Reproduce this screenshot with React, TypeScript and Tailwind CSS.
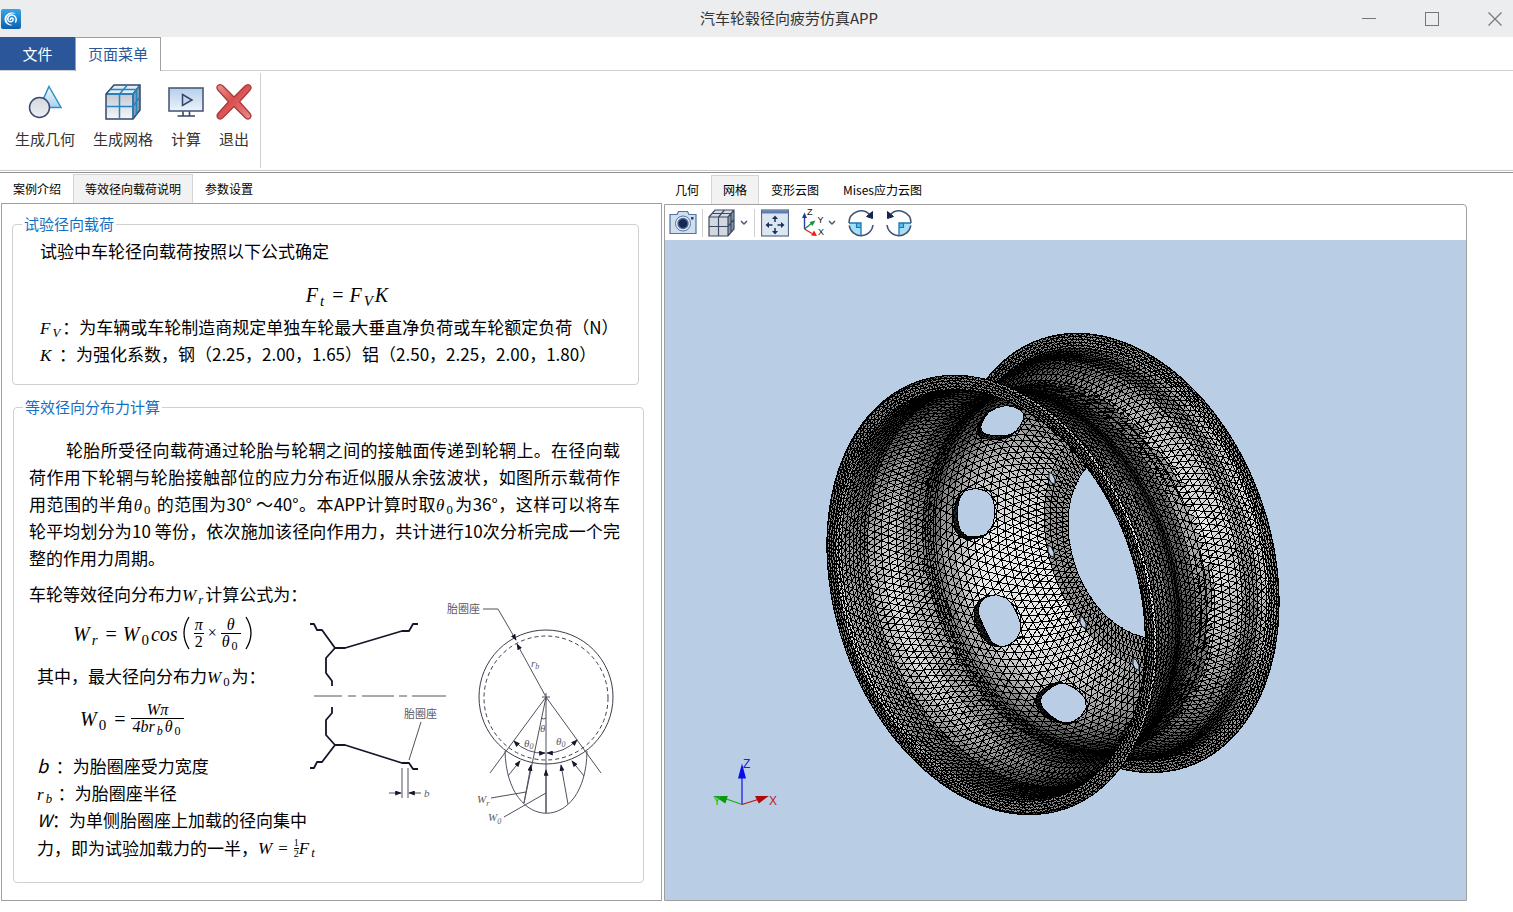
import React, { useMemo, useState } from "react";

type Vec2 = [number, number];

/* ---------- wheel mesh ---------- */

const CENTER: Vec2 = [990.5, 595];
const RIM_PROFILE: Vec2[] = [
  [2, 226], [0, 224], [0, 212], [6, 209], [24, 207], [42, 206], [58, 201], [74, 192], [98, 187],
  [118, 188], [134, 199], [150, 206], [170, 208], [179, 212], [181, 223], [181, 226],
];
const DISC_PROFILE: Vec2[] = [
  [98, 188], [130, 190], [148, 188], [160, 184], [170, 179], [185, 168], [200, 150], [210, 136], [215, 128], [216, 96],
];

const E1 = [0.165, 0.972, 0.167];
const E2 = [-0.711, 0, 0.703];
const AX = [0.683, -0.235, 0.691];

type Node3 = { x: number; y: number; z: number; out: boolean };

function project(s: number, r: number, a: number): Node3 {
  const c = Math.cos(a) * r;
  const d = Math.sin(a) * r;
  return {
    x: CENTER[0] + s * AX[0] + c * E1[0] + d * E2[0],
    y: CENTER[1] + s * AX[1] + c * E1[1],
    z: s * AX[2] + c * E1[2] + d * E2[2],
    out: false,
  };
}

function pathLengths(profile: Vec2[]): number[] {
  const acc = [0];
  for (let i = 1; i < profile.length; i++) {
    acc.push(acc[i - 1] + Math.hypot(profile[i][0] - profile[i - 1][0], profile[i][1] - profile[i - 1][1]));
  }
  return acc;
}

function at(profile: Vec2[], acc: number[], t: number): Vec2 {
  let i = 1;
  while (i < acc.length - 1 && acc[i] < t) i++;
  const k = Math.min(1, Math.max(0, (t - acc[i - 1]) / (acc[i] - acc[i - 1])));
  return [
    profile[i - 1][0] + k * (profile[i][0] - profile[i - 1][0]),
    profile[i - 1][1] + k * (profile[i][1] - profile[i - 1][1]),
  ];
}

type Hole = { a: number; t: number; da: number; dt: number; p: number };
const DEG = Math.PI / 180;
const HOLES: Hole[] = Array.from({ length: 10 }, (_, k) => ({
  a: (32.2 + 36 * k) * DEG,
  t: 71,
  da: 0.148,
  dt: 22,
  p: 2.5,
}));

const BOLTS: Vec2[] = [[1052, 478], [1051, 551], [1083, 622], [1136, 664]];

type Tri = { pts: Node3[]; z: number; shade: number };

function pushTri(list: Tri[], a: Node3, b: Node3, c: Node3, dim = 1) {
  if (a.out && b.out && c.out) return;
  const ux = b.x - a.x, uy = b.y - a.y, uz = b.z - a.z;
  const vx = c.x - a.x, vy = c.y - a.y, vz = c.z - a.z;
  const nx = uy * vz - uz * vy, ny = uz * vx - ux * vz, nz = ux * vy - uy * vx;
  const len = Math.hypot(nx, ny, nz);
  if (len < 0.01) return;
  const facing = Math.abs(nz) / len;
  const shade = Math.min(13, Math.floor(Math.pow(facing, 1.5) * 14 * dim));
  list.push({ pts: [a, b, c], z: (a.z + b.z + c.z) / 3, shade });
}

function surface(list: Tri[], profile: Vec2[], n: number, rows: number[], holes: Hole[], dim: number) {
  const acc = pathLengths(profile);
  const grid = rows.map((t0, j) => {
    const ring: Node3[] = [];
    for (let i = 0; i < n; i++) {
      let a = ((i + (j % 2) / 2) / n) * Math.PI * 2;
      let t = t0;
      let inside = false;
      for (const h of holes) {
        let da = a - h.a;
        if (da > Math.PI) da -= 2 * Math.PI;
        if (da < -Math.PI) da += 2 * Math.PI;
        const q = Math.pow(Math.abs(da / h.da), h.p) + Math.pow(Math.abs((t - h.t) / h.dt), h.p);
        if (q < 1) {
          const k = 1 / Math.pow(Math.max(q, 0.001), 1 / h.p);
          a = h.a + da * k;
          t = h.t + (t - h.t) * k;
          inside = true;
          break;
        }
      }
      const [s, r] = at(profile, acc, t);
      const node = project(s, r, a);
      node.out = inside;
      ring.push(node);
    }
    return ring;
  });
  for (let j = 0; j < grid.length - 1; j++) {
    for (let i = 0; i < n; i++) {
      const k = (i + 1) % n;
      const p = grid[j], q = grid[j + 1];
      if (j % 2 === 0) {
        pushTri(list, p[i], p[k], q[i], dim);
        pushTri(list, p[k], q[k], q[i], dim);
      } else {
        pushTri(list, p[i], q[k], q[i], dim);
        pushTri(list, p[i], p[k], q[k], dim);
      }
    }
  }
}

function holeWalls(list: Tri[]) {
  const acc = pathLengths(DISC_PROFILE);
  const steps = 40;
  for (const h of HOLES) {
    const near: Node3[] = [];
    const far: Node3[] = [];
    for (let i = 0; i < steps; i++) {
      const w = (i / steps) * Math.PI * 2;
      const cw = Math.cos(w), sw = Math.sin(w);
      const a = h.a + Math.sign(cw) * Math.pow(Math.abs(cw), 2 / h.p) * h.da;
      const t = h.t + Math.sign(sw) * Math.pow(Math.abs(sw), 2 / h.p) * h.dt;
      const [s, r] = at(DISC_PROFILE, acc, t);
      near.push(project(s, r, a));
      far.push(project(s + 9, r + 3, a));
    }
    for (let i = 0; i < steps; i++) {
      const k = (i + 1) % steps;
      pushTri(list, near[i], near[k], far[i], 0.4);
      pushTri(list, near[k], far[k], far[i], 0.4);
    }
  }
}

function buildMesh() {
  const tris: Tri[] = [];
  const rimLen = pathLengths(RIM_PROFILE);
  const total = rimLen[rimLen.length - 1];
  const rimRows: number[] = [];
  let t = 0;
  while (t < total) {
    rimRows.push(t);
    const edge = Math.min(t, total - t);
    t += edge < 20 ? 3 : edge < 55 ? 5 : 8;
  }
  rimRows.push(total);
  surface(tris, RIM_PROFILE, 176, rimRows, [], 0.95);

  const discLen = pathLengths(DISC_PROFILE);
  const discTotal = discLen[discLen.length - 1];
  const count = 22;
  const discRows = Array.from({ length: count + 1 }, (_, i) => (discTotal * i) / count);
  surface(tris, DISC_PROFILE, 124, discRows, HOLES, 1);
  holeWalls(tris);

  tris.sort((p, q) => q.z - p.z);
  const layers: { key: string; d: string; shade: number }[] = [];
  const per = Math.ceil(tris.length / 110);
  for (let i = 0; i < tris.length; i += per) {
    const groups = new Map<number, string[]>();
    for (const tri of tris.slice(i, i + per)) {
      const [a, b, c] = tri.pts;
      const part = `M${a.x.toFixed(1)} ${a.y.toFixed(1)}L${b.x.toFixed(1)} ${b.y.toFixed(1)}L${c.x.toFixed(1)} ${c.y.toFixed(1)}Z`;
      const g = groups.get(tri.shade);
      if (g) g.push(part);
      else groups.set(tri.shade, [part]);
    }
    groups.forEach((parts, shade) => layers.push({ key: `${i}-${shade}`, d: parts.join(""), shade }));
  }
  return layers;
}

function Viewport() {
  const layers = useMemo(buildMesh, []);
  return (
    <svg viewBox="665 240 801 659" className="block h-full min-h-0 w-full bg-[#b9cde5]" role="img" aria-label="网格">
      <g stroke="#000" strokeWidth="1" shapeRendering="crispEdges">
        {layers.map((l) => {
          const v = Math.round(25 + l.shade * 16);
          return <path key={l.key} d={l.d} fill={`rgb(${v},${v},${v})`} />;
        })}
      </g>
      <g fill="#b9cde5" stroke="#111" strokeWidth="1">
        {BOLTS.map(([x, y]) => (
          <path key={y} d={`M${x - 3} ${y - 6}L${x} ${y - 5}L${x + 3} ${y + 1}L${x + 3} ${y + 6}L${x - 1} ${y + 4}L${x - 3} ${y}Z`} />
        ))}
      </g>
      <g strokeWidth="1.2">
        <path d="M742 804V776" stroke="#1010f0" />
        <path d="M742 763l4 15h-8z" fill="#0a0af0" />
        <path d="M742 804l16-5" stroke="#c01010" />
        <path d="M767 796l-11 0 3 6z" fill="#b00a0a" stroke="#b00a0a" />
        <path d="M742 804l-17-6" stroke="#10b010" />
        <path d="M716 796l11 0-2 6z" fill="#0a9a0a" stroke="#0a9a0a" />
      </g>
      <g fontFamily="'Liberation Sans', Arial, sans-serif" fontSize="12">
        <text x="743" y="767" fill="#2020d0">Z</text>
        <text x="769" y="804" fill="#c02020">X</text>
        <text x="713" y="804" fill="#10c010">Y</text>
      </g>
    </svg>
  );
}

/* ---------- icons ---------- */

function LogoIcon() {
  return (
    <svg viewBox="0 0 20 20" className="h-5 w-5" aria-hidden="true">
      <defs>
        <linearGradient id="logo" x1="0" y1="0" x2="0" y2="1">
          <stop offset="0" stopColor="#35a7ec" />
          <stop offset="1" stopColor="#0d5fb0" />
        </linearGradient>
      </defs>
      <rect width="20" height="20" rx="2" fill="url(#logo)" />
      <path d="M9.300 10.600C9.500 8.600 12 8.600 12.200 10.400C12.300 12.800 8.800 13.600 7.300 11.600C5.600 8.900 8 5.900 11 6.100C14.600 6.400 16.200 10 14.600 13" fill="none" stroke="#fff" strokeWidth="1.500" strokeLinecap="round" />
      <path d="M15 4.800C10.500 1.500 3.500 4.500 3.500 10.300C3.600 14.600 8 17.600 12 15.900C8.500 15.900 5.600 13.600 5.500 10.300C5.500 6.400 9.500 3.600 15 4.800Z" fill="#fff" />
    </svg>
  );
}

function GeometryIcon() {
  return (
    <svg viewBox="0 0 38 38" className="h-[38px] w-[38px]" aria-hidden="true">
      <defs>
        <linearGradient id="tri" x1="0" y1="0" x2="0" y2="1"><stop offset="0" stopColor="#f4f9fd" /><stop offset="1" stopColor="#a9d0ee" /></linearGradient>
        <linearGradient id="ball" x1="0" y1="0" x2="0" y2="1"><stop offset="0" stopColor="#d4d8e0" /><stop offset="1" stopColor="#eceef2" /></linearGradient>
      </defs>
      <path d="M23 3.500L35 24.500H13.500Z" fill="url(#tri)" stroke="#2d8fcb" strokeWidth="1.500" />
      <circle cx="13.500" cy="24.500" r="10" fill="url(#ball)" stroke="#3b4a6e" strokeWidth="1.500" />
    </svg>
  );
}

function MeshIcon() {
  return (
    <svg viewBox="0 0 38 38" className="h-[38px] w-[38px]" aria-hidden="true">
      <defs><linearGradient id="cube" x1="0" y1="0" x2="0" y2="1"><stop offset="0" stopColor="#c3c8d2" /><stop offset="1" stopColor="#f6f7f9" /></linearGradient></defs>
      <path d="M2 11L10 2H36L29 11Z" fill="#e3ecf5" />
      <path d="M29 11L36 2V27L29 36Z" fill="#8a9ab2" />
      <rect x="2" y="11" width="27" height="25" fill="url(#cube)" />
      <path d="M2 11L10 2H36V27L29 36H2ZM2 11H29V36M29 11L36 2" fill="none" stroke="#34466b" strokeWidth="1.500" />
      <g stroke="#1f86c4" strokeWidth="1.500" fill="none">
        <path d="M15.500 35.500V11L23 2.500M2.500 23.500H29L35.500 14.500M6 6.500H32.500V31.500" />
        <path d="M3 11H29V35M29 11L35.500 3" strokeWidth="1.300" />
      </g>
    </svg>
  );
}

function ComputeIcon() {
  return (
    <svg viewBox="0 0 38 38" className="h-[38px] w-[38px]" aria-hidden="true">
      <defs><linearGradient id="scr" x1="0" y1="0" x2="0" y2="1"><stop offset="0" stopColor="#b4cfeb" /><stop offset="1" stopColor="#edf3fa" /></linearGradient></defs>
      <rect x="2" y="5" width="34" height="23" fill="url(#scr)" stroke="#4a5b7c" strokeWidth="1.600" />
      <path d="M15.500 11.500L25 17L15.500 22.500Z" fill="#c9d6e6" stroke="#34466b" strokeWidth="1.500" />
      <path d="M16 28.500V32.500M22.500 28.500V32.500M10.500 33H28" stroke="#34466b" strokeWidth="1.600" />
    </svg>
  );
}

function ExitIcon() {
  return (
    <svg viewBox="0 0 38 38" className="h-[38px] w-[38px]" aria-hidden="true">
      <defs><linearGradient id="ex" x1="0" y1="0" x2="1" y2="1"><stop offset="0" stopColor="#ee9494" /><stop offset="0.450" stopColor="#d94f4f" /><stop offset="1" stopColor="#ef8a8a" /></linearGradient></defs>
      <path d="M3 7Q0.800 4.200 3.200 2.200Q5.500 0.600 8 3L19 14L30 3Q32.600 0.600 35 2.400Q37 4.500 35 7L24.500 18.800L35 30.500Q37 33.200 34.800 35.200Q32.600 37 30 34.500L19 23.500L8 34.500Q5.500 37 3.200 35.200Q1 33.200 3 30.500L13.500 18.800Z" fill="url(#ex)" stroke="#a83a3a" strokeWidth="1.300" />
    </svg>
  );
}

function CameraIcon() {
  return (
    <svg viewBox="0 0 28 28" className="h-7 w-7" aria-hidden="true">
      <path d="M1 5.500H8L9.500 2.500H18.500L20 5.500H27V24.500H1Z" fill="#cfdff0" stroke="#54739f" strokeWidth="1.200" />
      <circle cx="14" cy="14.500" r="7.500" fill="#e9eff7" stroke="#54739f" />
      <circle cx="14" cy="14.500" r="5" fill="#16284f" stroke="#4a6796" strokeWidth="1.400" />
      <rect x="22" y="8" width="2.500" height="2.500" fill="#28406c" />
    </svg>
  );
}

function CubeIcon() {
  return (
    <svg viewBox="0 0 28 28" className="h-7 w-7" aria-hidden="true">
      <path d="M1 8L7 1H26L20 8Z" fill="#d5dbe4" />
      <path d="M20 8L26 1V20L20 27Z" fill="#8a95a8" />
      <rect x="1" y="8" width="19" height="19" fill="#d3d8e0" />
      <path d="M1 8L7 1H26V20L20 27H1ZM1 8H20V27M20 8L26 1M10.500 27V8L16.500 1M1 17.500H20L26 10.500M4 4.500H23V23.500" fill="none" stroke="#3c4963" strokeWidth="1.200" />
    </svg>
  );
}

function FitIcon() {
  return (
    <svg viewBox="0 0 28 28" className="h-7 w-7" aria-hidden="true">
      <rect x="0.500" y="1" width="27" height="26" fill="#dbe6f3" stroke="#54698f" strokeWidth="1.200" />
      <rect x="1" y="1.500" width="26" height="3" fill="#5d80b0" />
      <path d="M14 6.500l3 3.500h-6zM14 25.500l3-3.500h-6zM4.500 16l3.500-3v6zM23.500 16l-3.500-3v6z" fill="#1c2f58" />
      <path d="M14 9V13M14 19V23M7 16H11.500M16.500 16H21" stroke="#1c2f58" strokeWidth="1.500" />
    </svg>
  );
}

function AxesIcon() {
  return (
    <svg viewBox="0 0 24 30" className="h-[30px] w-6" aria-hidden="true">
      <path d="M3.500 21V8" stroke="#2a3fa0" strokeWidth="1.400" />
      <path d="M3.500 4.500l2.500 5.500h-5z" fill="#23389a" />
      <path d="M3.500 21L11 15" stroke="#189048" strokeWidth="1.400" />
      <path d="M14.500 12.500l-6 1.500 3 4z" fill="#189048" />
      <path d="M3.500 21L11 25.500" stroke="#e02020" strokeWidth="1.400" />
      <path d="M16 28l-3-5.500-3 5z" fill="#f01818" />
      <g fontFamily="'Liberation Sans', Arial, sans-serif" fontSize="9" fill="#111">
        <text x="6" y="7">Z</text>
        <text x="16.500" y="15">Y</text>
        <text x="17" y="27">X</text>
      </g>
    </svg>
  );
}

function RotateIcon({ ccw = false }: { ccw?: boolean }) {
  return (
    <svg viewBox="0 0 28 28" className={ccw ? "h-7 w-7 -scale-x-100" : "h-7 w-7"} aria-hidden="true">
      <path d="M2 14H14V26A12 12 0 0 1 2 14Z" fill="#a5dff7" />
      <rect x="9.500" y="14" width="4.500" height="4.500" fill="#56bdec" />
      <path d="M2 14H14V26" fill="none" stroke="#1f78b4" strokeWidth="1.300" />
      <path d="M9.500 14V18.500H14" fill="none" stroke="#1f78b4" strokeWidth="1.200" />
      <path d="M2 14A12 12 0 0 1 23 6M26 16A12 12 0 0 1 2.200 16.500" fill="none" stroke="#3e5274" strokeWidth="1.500" />
      <path d="M19.500 7.500L25.500 2.500V9.500Z" fill="#14264d" stroke="#14264d" />
    </svg>
  );
}

function Chevron() {
  return (
    <svg viewBox="0 0 8 6" className="h-[6px] w-2" aria-hidden="true">
      <path d="M1 1L4 4L7 1" fill="none" stroke="#46536c" strokeWidth="1.400" />
    </svg>
  );
}

/* ---------- formulas ---------- */

function V({ children, sub, roman }: { children: React.ReactNode; sub?: React.ReactNode; roman?: boolean }) {
  return (
    <span className="font-['Liberation_Serif',serif] leading-none italic">
      {children}
      {sub !== undefined && (
        <sub className={roman ? "px-[2px] text-[75%] leading-[0] not-italic" : "px-[2px] text-[75%] leading-[0]"}>{sub}</sub>
      )}
    </span>
  );
}

function Eq() {
  return <span className="px-[6px] font-['Liberation_Serif',serif] leading-none">=</span>;
}

function Frac({ top, bottom }: { top: React.ReactNode; bottom: React.ReactNode }) {
  return (
    <span className="inline-flex flex-col items-center text-center align-middle font-['Liberation_Serif',serif] leading-4">
      <span className="px-px">{top}</span>
      <span className="border-t border-black px-px">{bottom}</span>
    </span>
  );
}

function Paren({ flip = false }: { flip?: boolean }) {
  return (
    <svg viewBox="0 0 8 34" className={flip ? "h-[34px] w-2 -scale-x-100" : "h-[34px] w-2"} aria-hidden="true">
      <path d="M7 1Q-3 17 7 33" fill="none" stroke="#000" strokeWidth="1.300" />
    </svg>
  );
}

function Diagram() {
  return (
    <svg viewBox="305 595 314 235" className="h-[235px] w-[314px] shrink-0" role="img" aria-label="胎圈座受力示意图">
      <defs>
        <marker id="arr" viewBox="0 0 8 6" refX="7" refY="3" markerWidth="7" markerHeight="5" orient="auto-start-reverse" markerUnits="userSpaceOnUse">
          <path d="M0 0L8 3L0 6Z" fill="#15152c" />
        </marker>
      </defs>
      <g fill="none" stroke="#14142a" strokeWidth="1.800" strokeLinejoin="round">
        <path d="M310 625H314L317 631H322L335 649H345L402 632H409L413 625H418M335 649L326 659V674L332 682V687" />
        <path d="M310 769H314L317 763H322L335 746H345L402 764H409L413 770H418M335 746L326 736V721L332 714V708" />
      </g>
      <path d="M314 697H342M348 697H356M362 697H394M399 697H407M412 697H446" stroke="#555" strokeWidth="1" />
      <g fill="none" stroke="#50505e" strokeWidth="1">
        <path d="M421 723L409 761M402 769V799M408 769V799" />
        <path d="M389 794H401" markerEnd="url(#arr)" />
        <path d="M421 794H409" markerEnd="url(#arr)" />
        <circle cx="546" cy="698" r="67" stroke="#3c3c4a" />
        <circle cx="546" cy="699" r="62" stroke="#3c3c4a" strokeDasharray="4 3" />
        <path d="M483 610H498L516 641" markerEnd="url(#arr)" />
        <path d="M546 698L517 645" markerEnd="url(#arr)" />
        <path d="M546 698L490 774M546 698L601 774M546 698L524 804M546 698V814M542 698H550M546 694V702M541 719Q544 721 546 719" />
        <path d="M505 752C507 835 586 835 587 752" />
        <path d="M545 754Q527 755 514 742" markerStart="url(#arr)" markerEnd="url(#arr)" />
        <path d="M547 754Q564 754 577 741" markerStart="url(#arr)" markerEnd="url(#arr)" />
        <path d="M508 777L520 762" markerEnd="url(#arr)" />
        <path d="M584 777L572 762" markerEnd="url(#arr)" />
        <path d="M524 804L531 766" markerEnd="url(#arr)" />
        <path d="M568 805L561 766" markerEnd="url(#arr)" />
        <path d="M546 814V771" markerEnd="url(#arr)" />
        <path d="M491 799L526 793M504 818L546 794" />
      </g>
      <g fill="#5a5a68" fontSize="11" fontFamily="'Noto Sans CJK SC', sans-serif">
        <text x="447" y="614">胎圈座</text>
        <text x="404" y="719">胎圈座</text>
      </g>
      <g fill="#5a5a68" fontSize="11" fontStyle="italic" fontFamily="'Liberation Serif', serif">
        <text x="424" y="798">b</text>
        <text x="531" y="668">r<tspan fontSize="8" dy="2">b</tspan></text>
        <text x="540" y="733">θ</text>
        <text x="524" y="748">θ<tspan fontSize="8" dy="2">0</tspan></text>
        <text x="556" y="746">θ<tspan fontSize="8" dy="2">0</tspan></text>
        <text x="477" y="804">W<tspan fontSize="8" dy="3">r</tspan></text>
        <text x="488" y="822">W<tspan fontSize="8" dy="3">0</tspan></text>
      </g>
    </svg>
  );
}

/* ---------- page ---------- */

function Tabs({ items, active, onSelect }: { items: string[]; active: string; onSelect: (t: string) => void }) {
  return (
    <div className="flex h-[29px]" role="tablist">
      {items.map((t) => (
        <button
          key={t}
          role="tab"
          aria-selected={t === active}
          onClick={() => onSelect(t)}
          className={
            t === active
              ? "border border-b-0 border-[#d5d5d5] bg-[#f2f2f2] px-[11px] text-xs text-black"
              : "px-3 text-xs text-black"
          }
        >
          {t}
        </button>
      ))}
    </div>
  );
}

const RIBBON = [
  { label: "生成几何", icon: <GeometryIcon /> },
  { label: "生成网格", icon: <MeshIcon /> },
  { label: "计算", icon: <ComputeIcon /> },
  { label: "退出", icon: <ExitIcon /> },
];

export default function App() {
  const [leftTab, setLeftTab] = useState("等效径向载荷说明");
  const [rightTab, setRightTab] = useState("网格");

  return (
    <div className="flex min-h-screen flex-col bg-white font-['Noto_Sans_CJK_SC',sans-serif] text-black">
      <header className="flex h-[37px] items-center bg-[#ecedef]">
        <div className="flex flex-1 pl-px"><LogoIcon /></div>
        <h1 className="pl-16 text-[15px] text-[#333]">汽车轮毂径向疲劳仿真APP</h1>
        <div className="flex flex-1 justify-end gap-[27px] text-[#777]">
          <button aria-label="最小化" className="flex h-9 w-9 items-center justify-center">
            <svg viewBox="0 0 14 14" className="h-[14px] w-[14px]"><path d="M0 6.500H14" stroke="currentColor" /></svg>
          </button>
          <button aria-label="最大化" className="flex h-9 w-9 items-center justify-center">
            <svg viewBox="0 0 14 14" className="h-[14px] w-[14px]"><rect x="0.500" y="0.500" width="13" height="13" fill="none" stroke="currentColor" /></svg>
          </button>
          <button aria-label="关闭" className="flex h-9 w-9 items-center justify-center">
            <svg viewBox="0 0 14 14" className="h-[14px] w-[14px]"><path d="M0.500 0.500L13.500 13.500M13.500 0.500L0.500 13.500" stroke="currentColor" strokeWidth="1.200" /></svg>
          </button>
        </div>
      </header>

      <nav className="flex h-[34px] border-b border-[#d0d0d0] text-[15px]">
        <button className="h-[33px] w-[75px] bg-[#2b579a] pt-px text-white">文件</button>
        <button className="-mb-px h-[34px] w-[86px] border border-b-0 border-[#a0a0a0] bg-white text-[#2b579a]">页面菜单</button>
      </nav>

      <div className="flex h-[100px] border-b border-[#c8c8c8] py-[2px]">
        <div className="flex items-start gap-[18px] border-r border-[#d0d0d0] pl-[15px] pr-[11px] pt-[10px]">
          {RIBBON.map((r) => (
            <button key={r.label} className="flex flex-col items-center text-[15px] text-[#333]">
              <span className={r.label.length > 2 ? "block" : "-mx-1 block"}>{r.icon}</span>
              <span className="mt-[7px] leading-[22px]">{r.label}</span>
            </button>
          ))}
        </div>
      </div>
      <div className="mt-px border-t border-[#909090]" />

      <main className="flex flex-1 pb-[11px] pt-px">
        <section className="flex w-[662px] max-w-[44%] shrink-0 flex-col">
          <div className="pl-px">
            <Tabs items={["案例介绍", "等效径向载荷说明", "参数设置"]} active={leftTab} onSelect={setLeftTab} />
          </div>
          <div className="ml-px flex-1 border border-[#a0a0a0] pb-[15px] pl-[10px] pr-[17px] pt-[9px]">
            <fieldset className="mr-[5px] min-w-0 rounded-sm border border-[#d0d0d0] pb-[17px] pl-[27px]">
              <legend className="-ml-[18px] px-[2px] text-[15px] leading-[22px] text-[#1470c4]">试验径向载荷</legend>
              <p className="text-[17px] leading-8">试验中车轮径向载荷按照以下公式确定</p>
              <p className="mt-[11px] pl-4 text-center text-xl leading-8">
                <V sub="t">F</V><Eq /><V sub="V">F</V><V>K</V>
              </p>
              <p className="mt-[3px] whitespace-nowrap text-[17px] leading-[27px]">
                <V sub="V">F</V>：为车辆或车轮制造商规定单独车轮最大垂直净负荷或车轮额定负荷（N）
              </p>
              <p className="whitespace-nowrap text-[17px] leading-[27px]">
                <V>K</V>&nbsp; ：为强化系数，钢（2.25，2.00，1.65）铝（2.50，2.25，2.00，1.80）
              </p>
            </fieldset>

            <fieldset className="ml-px mt-[11px] min-w-0 rounded-sm border border-[#d0d0d0] pb-[19px] pl-[15px] pr-[23px]">
              <legend className="-ml-[6px] px-[2px] text-[15px] leading-[22px] text-[#1470c4]">等效径向分布力计算</legend>
              <p className="mt-[18px] text-justify indent-[37px] text-[17px] leading-[27px]">
                轮胎所受径向载荷通过轮胎与轮辋之间的接触面传递到轮辋上。在径向载荷作用下轮辋与轮胎接触部位的应力分布近似服从余弦波状，如图所示载荷作用范围的半角<V sub="0" roman>θ</V> 的范围为30° ～40°。本APP计算时取<V sub="0" roman>θ</V>为36°，这样可以将车轮平均划分为10 等份，依次施加该径向作用力，共计进行10次分析完成一个完整的作用力周期。
              </p>
              <div className="mt-[9px] flex">
                <div className="w-[276px] shrink-0 whitespace-nowrap text-[17px]">
                  <p className="leading-7">车轮等效径向分布力<V sub="r">W</V>计算公式为：</p>
                  <p className="flex h-[50px] items-center gap-1 pl-11 text-xl">
                    <span><V sub="r">W</V><Eq /><V sub="0" roman>W</V><V>cos</V></span>
                    <span className="flex items-center gap-1 text-base">
                      <Paren />
                      <Frac top={<V>π</V>} bottom="2" />
                      <span className="font-['Liberation_Serif',serif]">×</span>
                      <Frac top={<V>θ</V>} bottom={<V sub="0" roman>θ</V>} />
                      <Paren flip />
                    </span>
                  </p>
                  <p className="pl-2 leading-9">其中，最大径向分布力<V sub="0" roman>W</V>为：</p>
                  <p className="flex h-12 items-center pl-[51px] text-xl">
                    <span><V sub="0" roman>W</V><Eq /></span>
                    <span className="text-base"><Frac top={<V>Wπ</V>} bottom={<V>4b<V sub="b">r</V><V sub="0" roman>θ</V></V>} /></span>
                  </p>
                  <p className="mt-[10px] pl-2 leading-[27px]"><i className="text-lg leading-[0]">b</i>&nbsp; ：为胎圈座受力宽度</p>
                  <p className="pl-2 leading-[27px]"><V sub="b">r</V>&nbsp;：为胎圈座半径</p>
                  <p className="pl-2 leading-[27px]"><i>W</i>：为单侧胎圈座上加载的径向集中</p>
                  <p className="flex items-center pl-2 leading-[30px]">
                    力，即为试验加载力的一半，
                    <V>W</V><Eq />
                    <span className="flex flex-col text-center font-['Liberation_Serif',serif] text-[10px] leading-[10px]">
                      <span>1</span><span className="border-t border-black">2</span>
                    </span>
                    <V sub="t">F</V>
                  </p>
                </div>
                <div className="pt-[14px]"><Diagram /></div>
              </div>
            </fieldset>
          </div>
        </section>

        <section className="ml-px mr-[46px] flex min-w-0 flex-1 flex-col pt-px">
          <Tabs items={["几何", "网格", "变形云图", "Mises应力云图"]} active={rightTab} onSelect={setRightTab} />
          <div className="ml-px flex flex-1 flex-col rounded-tr-sm border border-[#a0a0a0]">
            <div className="flex h-[35px] items-center pl-1" role="toolbar">
              <button aria-label="截图"><CameraIcon /></button>
              <span className="mx-[5px] h-7 w-px bg-[#d0d0d0]" />
              <button aria-label="视图" className="flex items-center gap-1"><CubeIcon /><Chevron /></button>
              <span className="mx-[6px] h-7 w-px bg-[#d0d0d0]" />
              <button aria-label="适应窗口"><FitIcon /></button>
              <button aria-label="坐标方向" className="ml-3 flex items-center gap-[3px]"><AxesIcon /><Chevron /></button>
              <button aria-label="顺时针旋转" className="ml-[11px]"><RotateIcon /></button>
              <button aria-label="逆时针旋转" className="ml-[10px]"><RotateIcon ccw /></button>
            </div>
            <div className="flex min-h-0 flex-1 bg-[#b9cde5]"><Viewport /></div>
          </div>
        </section>
      </main>
    </div>
  );
}
